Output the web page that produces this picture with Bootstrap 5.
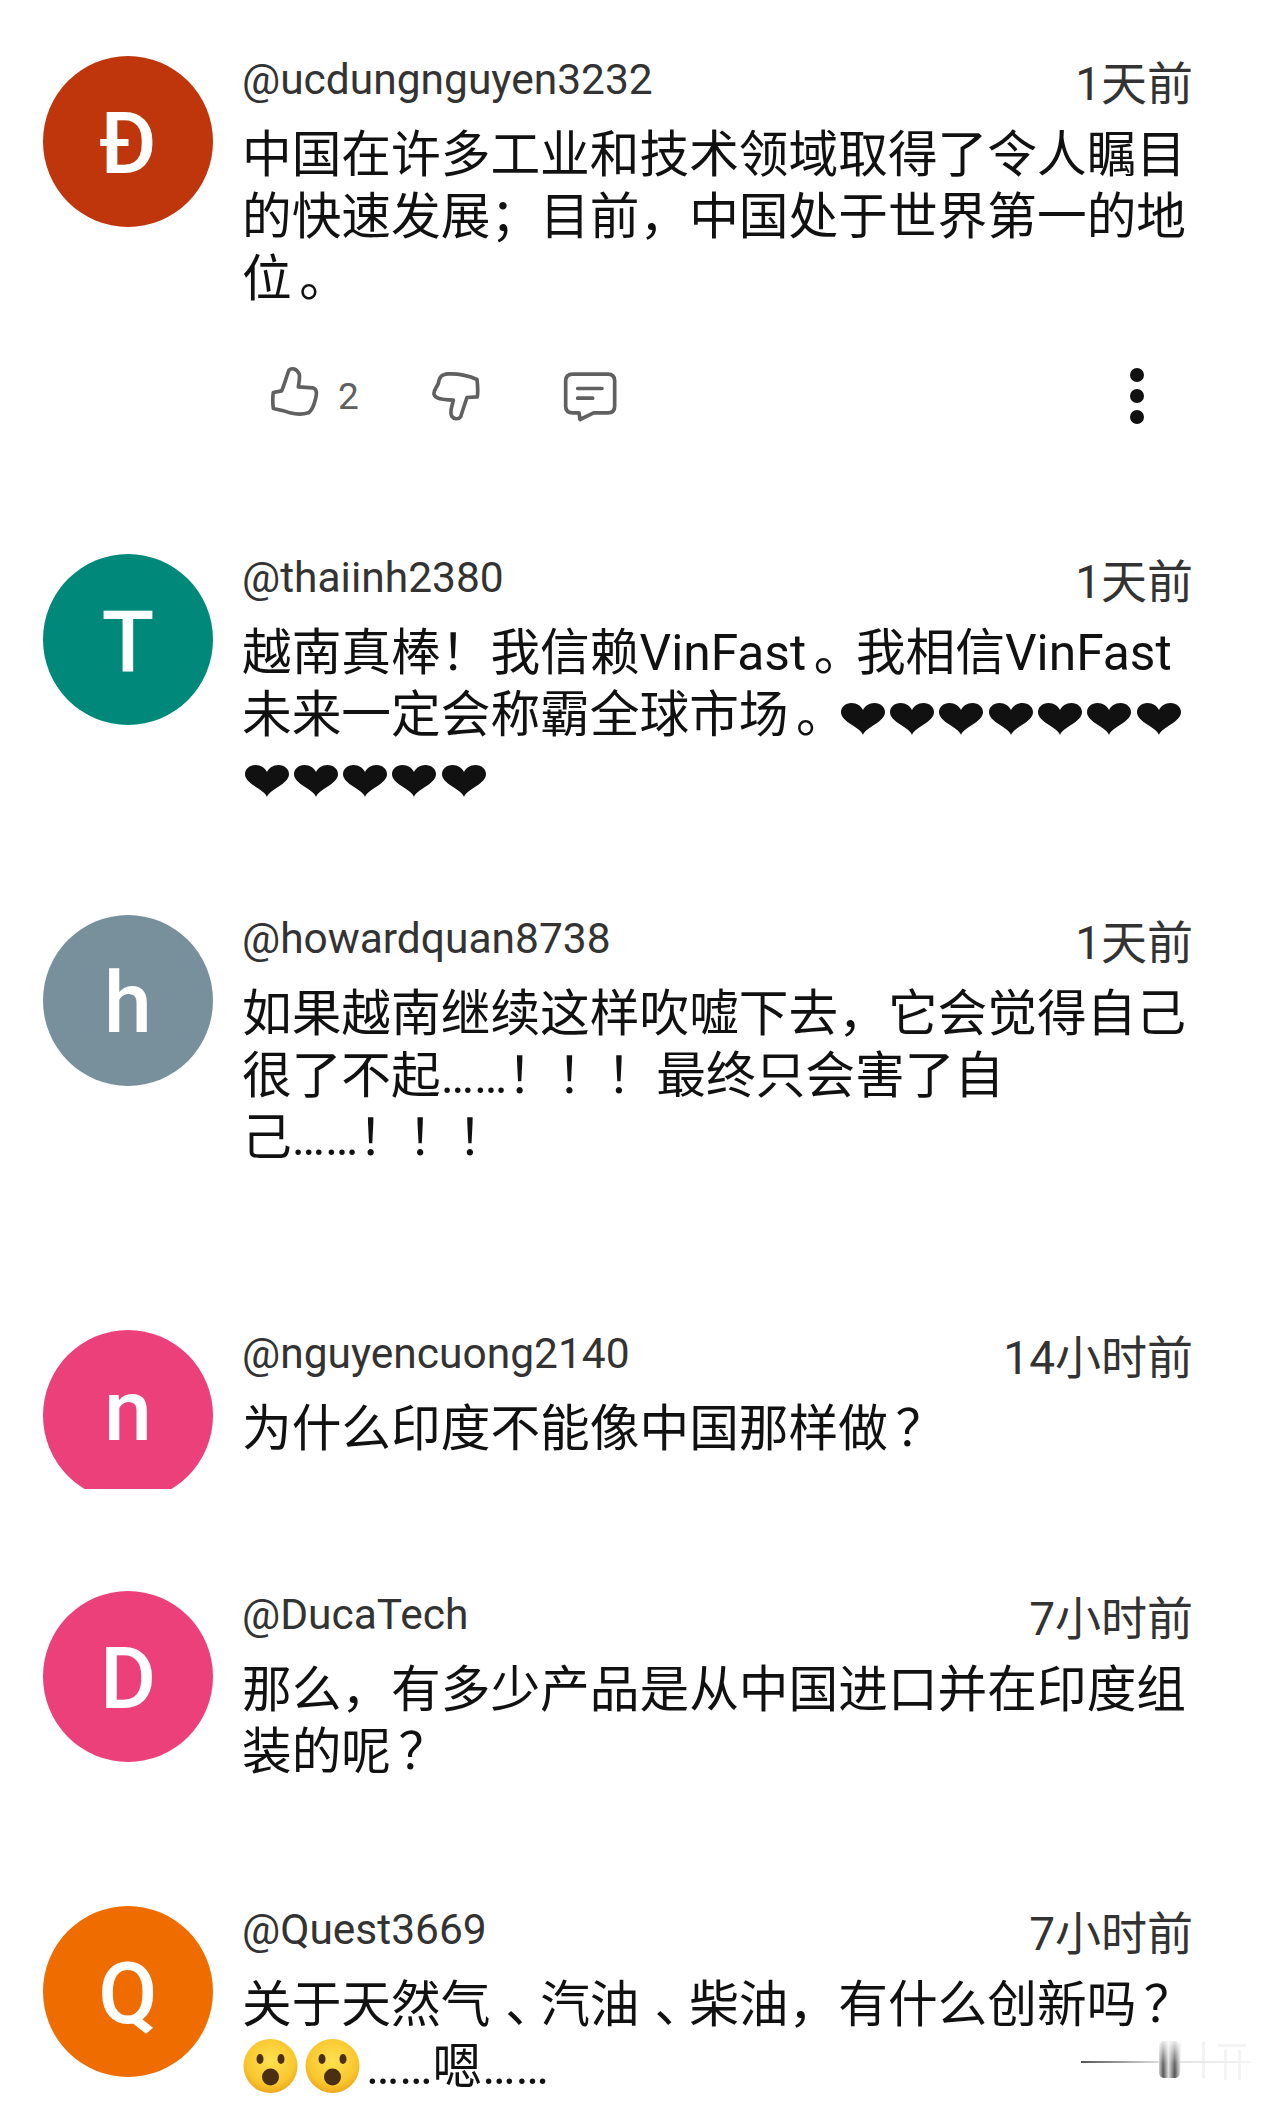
<!DOCTYPE html>
<html lang="zh-CN">
<head>
<meta charset="utf-8">
<title>Comments</title>
<link href="https://cdn.jsdelivr.net/npm/bootstrap@5.3.0/dist/css/bootstrap.min.css" rel="stylesheet">
<style>
html,body{height:2103px;overflow:hidden;background:#fff}
body{font-family:Roboto,"Noto Sans CJK SC",sans-serif;color:#111}
.thread{padding:56px 87px 0 43px;position:relative;height:2103px;overflow:hidden}
.cmt{gap:29px}
.h1c{height:498px}.h2c{height:361px}.h3c{height:415px}.h4c{height:261px}.h5c{height:315px}.h6c{height:196px}
.ava-wrap{width:170px;flex:none;height:171px;overflow:hidden}
.ava-cut{height:159px}
.ava{width:170px;height:171px;border-radius:50%;color:#fff;font-size:86px;line-height:175px;text-align:center;font-weight:500}
.ava span{filter:blur(.7px);display:inline-block}
.a-d{background:#bf360c}.a-t{background:#00897b}.a-h{background:#78909c}.a-p{background:#ec407a}.a-q{background:#ef6c00}
.ava-up{line-height:161px}
.headrow{height:48px}
.uname{font-size:42.500px;line-height:48px;color:#333}
.when{font-size:46px;line-height:56px;color:#333}
.bodytxt{font-size:49.7px;line-height:62px;margin-top:20px;white-space:nowrap;color:#111}
.pu-a{padding-left:.15em;letter-spacing:-.15em}
.pu-b{padding-left:.3em;letter-spacing:-.3em}
.acts{margin:56px 0 0 28px;height:60px}
.cnt{font-size:37px;color:#606060;margin-left:18px;width:92px;line-height:1}
.ic-up{width:50px;height:52px;margin-top:-10px}
.ic-dn{width:50px;height:52px;margin-right:83px}
.ic-cm{width:55px;height:52px}
.ic-more{width:14px;height:56px;margin-left:auto;margin-right:49px}
.hrt{width:44px;height:32px;margin:0 2.8px 0 2.5px;vertical-align:-2.5px}
.emo{width:57px;height:56px;vertical-align:-.2em;margin-right:5px}
.mark-wm{position:absolute;left:1078px;top:2036px;width:180px;height:50px}
</style>
</head>
<body>
<svg width="0" height="0" class="position-absolute">
<defs>
<symbol id="heart" viewBox="0 0 44 32" preserveAspectRatio="none"><path d="M22 32C21 28 14 24 8 20 3 16.500 0 13 0 9 0 4 4.500 0 10.500 0 16 0 20 3 22 7 24 3 28 0 33.500 0 39.500 0 44 4 44 9 44 13 41 16.500 36 20 30 24 23 28 22 32Z" fill="#111"/></symbol>
<radialGradient id="face" cx="50%" cy="40%" r="60%"><stop offset="0" stop-color="#fde24f"/><stop offset=".75" stop-color="#f9c62e"/><stop offset="1" stop-color="#eda81c"/></radialGradient>
<symbol id="wow" viewBox="0 0 57 56"><ellipse cx="28.500" cy="28" rx="27" ry="27" fill="url(#face)"/><ellipse cx="18" cy="21" rx="3.500" ry="5" fill="#4a2f12"/><ellipse cx="39" cy="21" rx="3.500" ry="5" fill="#4a2f12"/><ellipse cx="28.500" cy="39" rx="8.500" ry="8.500" fill="#4a2f12"/></symbol>
<linearGradient id="lineg" x1="0" x2="1"><stop offset="0" stop-color="#555"/><stop offset=".45" stop-color="#ddd"/><stop offset="1" stop-color="#f5f5f5"/></linearGradient>
<linearGradient id="barg" x1="0" x2="1"><stop offset="0" stop-color="#ccc"/><stop offset=".2" stop-color="#555"/><stop offset=".45" stop-color="#ddd"/><stop offset=".75" stop-color="#555"/><stop offset="1" stop-color="#ddd"/></linearGradient>
<linearGradient id="barv" x1="0" x2="0" y1="0" y2="1"><stop offset="0" stop-color="#fff" stop-opacity=".9"/><stop offset=".7" stop-color="#fff" stop-opacity=".1"/><stop offset="1" stop-color="#fff" stop-opacity="0"/></linearGradient>
</defs>
</svg>
<main class="thread">

<section class="cmt d-flex h1c">
  <div class="ava-wrap"><div class="ava a-d"><span>Đ</span></div></div>
  <div class="flex-grow-1">
    <div class="headrow d-flex justify-content-between"><span class="uname">@ucdungnguyen3232</span><span class="when">1天前</span></div>
    <div class="bodytxt">中国在许多工业和技术领域取得了令人瞩目<br>的快速发展；目前，中国处于世界第一的地<br>位<span class="pu-a">。</span></div>
    <div class="acts d-flex align-items-center">
      <svg class="ic-up" viewBox="90 45 150 155" fill="none" stroke="#606060" stroke-width="11" stroke-linejoin="round"><path d="M100 127 125 122C135 100 140 75 147 60 155 52 170 55 178 72 180 85 176 100 175 110L218 113C230 116 232 128 226 148 222 165 218 180 205 188 190 193 165 192 150 188 135 182 115 178 100 175 98 160 98 140 100 127Z"/></svg>
      <span class="cnt">2</span>
      <svg class="ic-dn" viewBox="570 60 150 155" fill="none" stroke="#606060" stroke-width="11" stroke-linejoin="round"><path d="M711 88C690 78 660 70 625 71 605 72 598 80 595 100 590 112 580 120 582 132 585 145 600 148 640 150 636 170 628 185 635 198 642 208 655 208 662 200 668 180 675 160 681 142L712 140C714 125 713 105 711 88Z"/></svg>
      <svg class="ic-cm" viewBox="970 60 165 155" fill="none" stroke="#606060" stroke-width="11" stroke-linejoin="round" stroke-linecap="round"><path d="M1000 72H1104Q1125 72 1125 92V168Q1125 188 1104 188H1062L1021 208 1018 188H1000Q978 188 978 168V92Q978 72 1000 72Z"/><path d="M1014 115H1087M1014 144H1059"/></svg>
      <svg class="ic-more" viewBox="0 0 14 56" fill="#111"><circle cx="7" cy="7" r="7"/><circle cx="7" cy="28" r="7"/><circle cx="7" cy="49" r="7"/></svg>
    </div>
  </div>
</section>

<section class="cmt d-flex h2c">
  <div class="ava-wrap"><div class="ava a-t"><span>T</span></div></div>
  <div class="flex-grow-1">
    <div class="headrow d-flex justify-content-between"><span class="uname">@thaiinh2380</span><span class="when">1天前</span></div>
    <div class="bodytxt">越南真棒！我信赖VinFast<span class="pu-a">。</span>我相信VinFast<br>未来一定会称霸全球市场<span class="pu-a">。</span><svg class="hrt"><use href="#heart"/></svg><svg class="hrt"><use href="#heart"/></svg><svg class="hrt"><use href="#heart"/></svg><svg class="hrt"><use href="#heart"/></svg><svg class="hrt"><use href="#heart"/></svg><svg class="hrt"><use href="#heart"/></svg><svg class="hrt"><use href="#heart"/></svg><br><svg class="hrt"><use href="#heart"/></svg><svg class="hrt"><use href="#heart"/></svg><svg class="hrt"><use href="#heart"/></svg><svg class="hrt"><use href="#heart"/></svg><svg class="hrt"><use href="#heart"/></svg></div>
  </div>
</section>

<section class="cmt d-flex h3c">
  <div class="ava-wrap"><div class="ava a-h"><span>h</span></div></div>
  <div class="flex-grow-1">
    <div class="headrow d-flex justify-content-between"><span class="uname">@howardquan8738</span><span class="when">1天前</span></div>
    <div class="bodytxt">如果越南继续这样吹嘘下去，它会觉得自己<br>很了不起……！！！最终只会害了自<br>己……！！！</div>
  </div>
</section>

<section class="cmt d-flex h4c">
  <div class="ava-wrap ava-cut"><div class="ava a-p ava-up"><span>n</span></div></div>
  <div class="flex-grow-1">
    <div class="headrow d-flex justify-content-between"><span class="uname">@nguyencuong2140</span><span class="when">14小时前</span></div>
    <div class="bodytxt">为什么印度不能像中国那样做<span class="pu-a">？</span></div>
  </div>
</section>

<section class="cmt d-flex h5c">
  <div class="ava-wrap"><div class="ava a-p"><span>D</span></div></div>
  <div class="flex-grow-1">
    <div class="headrow d-flex justify-content-between"><span class="uname">@DucaTech</span><span class="when">7小时前</span></div>
    <div class="bodytxt">那么，有多少产品是从中国进口并在印度组<br>装的呢<span class="pu-a">？</span></div>
  </div>
</section>

<section class="cmt d-flex h6c">
  <div class="ava-wrap"><div class="ava a-q"><span>Q</span></div></div>
  <div class="flex-grow-1">
    <div class="headrow d-flex justify-content-between"><span class="uname">@Quest3669</span><span class="when">7小时前</span></div>
    <div class="bodytxt">关于天然气<span class="pu-b">、</span>汽油<span class="pu-b">、</span>柴油，有什么创新吗<span class="pu-a">？</span><br><svg class="emo"><use href="#wow"/></svg><svg class="emo"><use href="#wow"/></svg>……嗯……</div>
  </div>
</section>

<svg class="mark-wm" viewBox="0 0 180 50">
  <g fill="#f4f4f4"><rect x="100" y="6" width="3" height="30"/><rect x="124" y="6" width="3" height="36"/><rect x="140" y="8" width="28" height="3"/><rect x="146" y="14" width="3" height="30"/><rect x="160" y="14" width="3" height="30"/></g>
  <rect x="3" y="25" width="170" height="2" fill="url(#lineg)"/>
  <rect x="81" y="5" width="21" height="37" rx="5" fill="url(#barg)"/>
  <rect x="81" y="4" width="21" height="33" fill="url(#barv)"/>
</svg>
</main>
<script src="https://cdn.jsdelivr.net/npm/bootstrap@5.3.0/dist/js/bootstrap.bundle.min.js"></script>
</body>
</html>
